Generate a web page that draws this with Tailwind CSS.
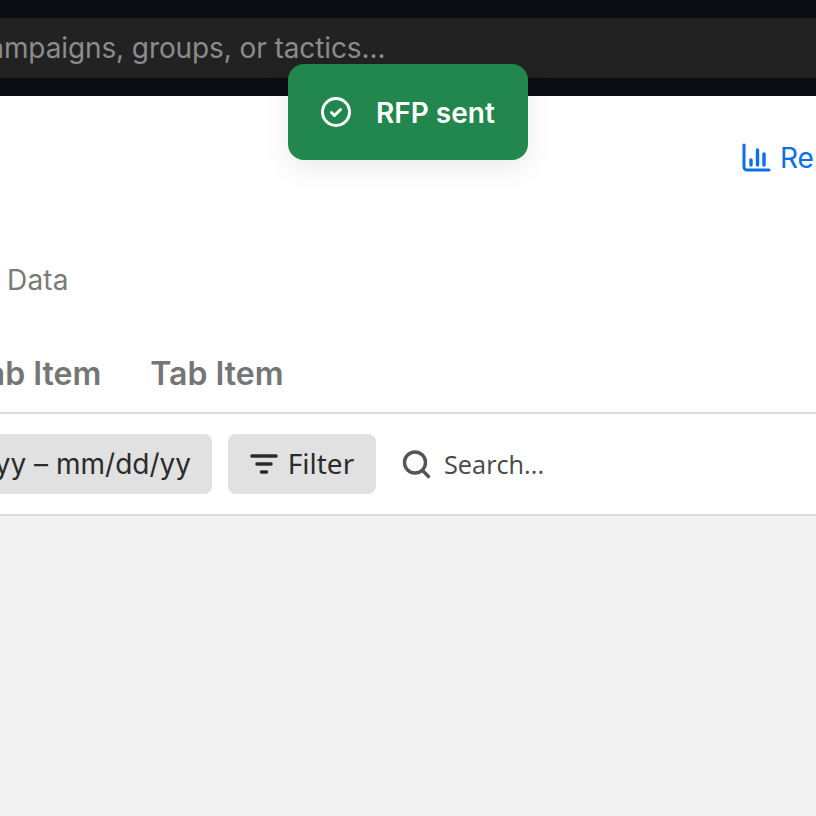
<!DOCTYPE html>
<html lang="en">
<head>
  <meta charset="UTF-8" />
  <title>Campaigns</title>
  <script src="https://cdn.jsdelivr.net/npm/@tailwindcss/browser@4"></script>
</head>
<body class="bg-[#f1f1f1] font-['Inter',sans-serif] antialiased overflow-hidden">
  <div class="relative w-[816px] h-[816px] overflow-hidden flex flex-col">
    <!-- top bar -->
    <header class="h-[96px] shrink-0 bg-[#0a0e12] pt-[18px]">
      <div class="h-[60px] bg-[#222222] flex items-center overflow-hidden">
        <span class="ml-[-128px] text-[28px] leading-[60px] tracking-[-0.1px] text-[#8c8c8c] whitespace-nowrap">Search campaigns, groups, or tactics...</span>
      </div>
    </header>

    <!-- toast -->
    <div class="absolute left-[288px] top-[64px] w-[240px] h-[96px] rounded-[16px] bg-[#21874e] shadow-[0_8px_28px_rgba(0,0,0,0.09)] flex items-center pl-[32px] gap-[24px] text-white">
      <svg class="w-[32px] h-[32px]" viewBox="0 0 32 32" fill="none" stroke="currentColor" stroke-width="3" stroke-linecap="round" stroke-linejoin="round">
        <circle cx="16" cy="16" r="13.5" />
        <path d="M11.5 16.5l3 3 6-6" />
      </svg>
      <span class="text-[28px] font-semibold leading-none whitespace-nowrap pt-[1px]">RFP sent</span>
    </div>

    <!-- page header -->
    <section class="bg-white h-[420px] shrink-0 flex flex-col">
      <div class="h-[316px] shrink-0">
        <div class="flex items-center h-[32px] mt-[46px] ml-[741px] gap-[9px] text-[#0a6fe8] whitespace-nowrap">
          <svg class="w-[30px] h-[30px] shrink-0" viewBox="0 0 30 30" fill="none" stroke="currentColor" stroke-linecap="round" stroke-linejoin="round">
            <path stroke-width="3" d="M3 2v22a3 3 0 0 0 3 3h22" />
            <path stroke-width="3.4" d="M10 17v5M16.5 7v15M23 11v11" />
          </svg>
          <span class="text-[28px] leading-none">Reports</span>
        </div>
        <p class="mt-[90px] ml-[7px] text-[28px] leading-[32px] tracking-[0.2px] text-[#7a7a7a]">Data</p>
        <div class="mt-[60px] flex gap-[49px] ml-[-32px] text-[32px] font-semibold leading-[36px] text-[#757575] whitespace-nowrap">
          <span>Tab Item</span>
          <span>Tab Item</span>
        </div>
      </div>
      <div class="h-[104px] border-t-2 border-b-2 border-[#dcdcdc] flex items-center">
        <div class="ml-[-60px] w-[272px] h-[60px] rounded-[8px] bg-[#e1e1e1] flex items-center justify-end pr-[21px] text-[28px] text-[#2b2b2b] whitespace-nowrap">mm/dd/yy – mm/dd/yy</div>
        <div class="ml-[16px] w-[148px] h-[60px] rounded-[8px] bg-[#e1e1e1] flex items-center justify-center gap-[10px] text-[28px] text-[#2b2b2b]">
          <svg class="w-[28px] h-[28px]" viewBox="0 0 28 28" fill="none" stroke="currentColor" stroke-width="3.6" stroke-linecap="round">
            <path d="M2 6h24M7 14h14M11.5 22h5" />
          </svg>
          <span class="font-['Noto_Sans',sans-serif] mt-[-2px]">Filter</span>
        </div>
        <div class="ml-[24px] flex items-center gap-[12px] text-[#484848]">
          <svg class="w-[32px] h-[32px] text-[#555555]" viewBox="0 0 32 32" fill="none" stroke="currentColor" stroke-width="3.4" stroke-linecap="round">
            <circle cx="15" cy="14.5" r="10.5" />
            <path d="M22.5 22.5L28.5 28.5" />
          </svg>
          <span class="font-['Open_Sans',sans-serif] text-[25.3px] mt-[1px]">Search...</span>
        </div>
      </div>
    </section>
  </div>
</body>
</html>
